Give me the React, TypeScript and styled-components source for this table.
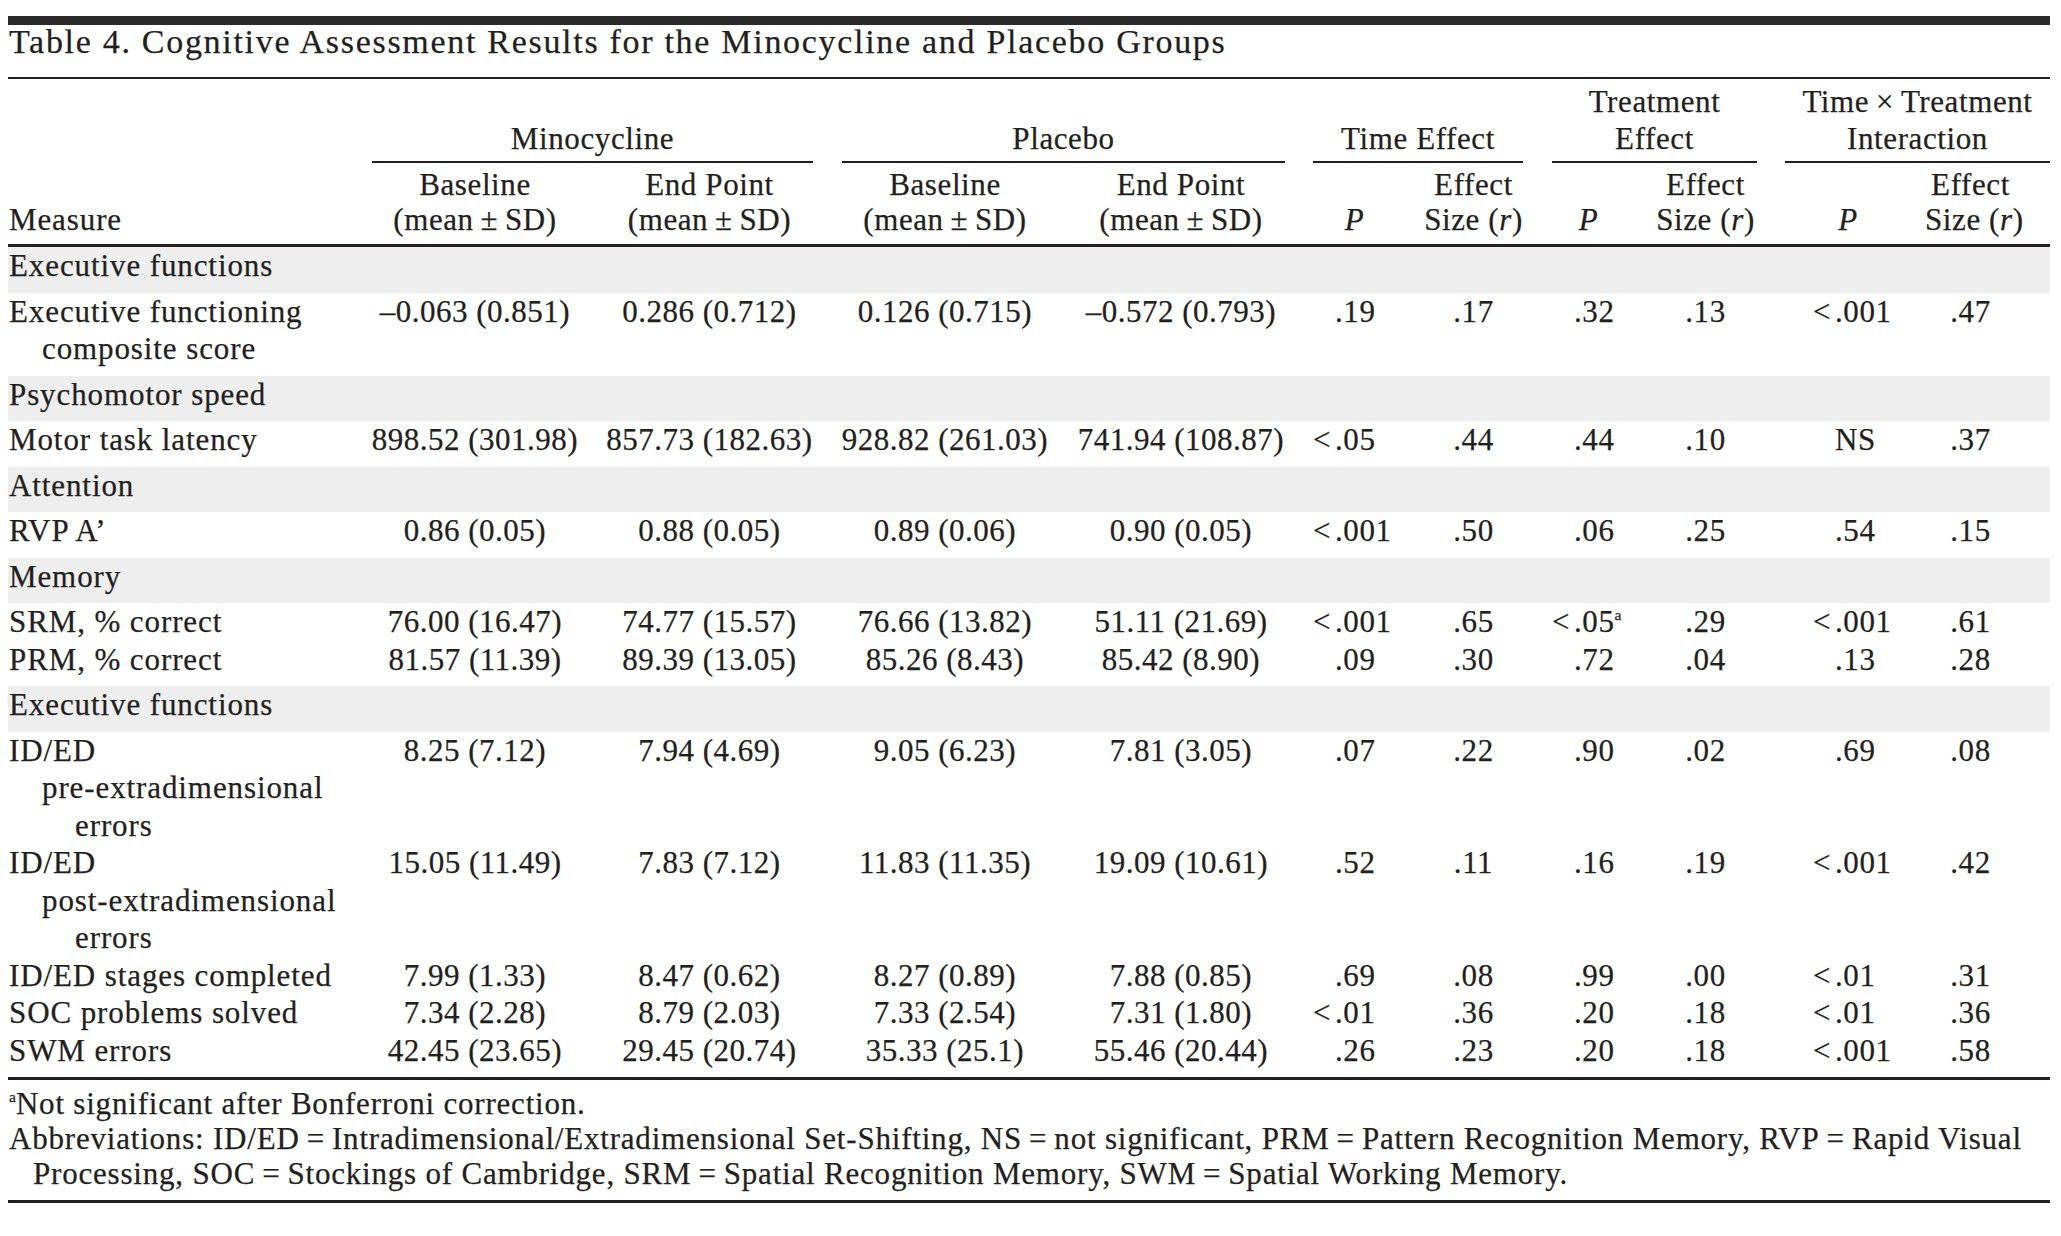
import React from 'react'
import styled, { createGlobalStyle } from 'styled-components'

const INK = '#231f20'
const COLS = '350px 234px 235px 236px 236px 111px 127px 103px 131px 154px 125px'

const GlobalStyle = createGlobalStyle`
  body {
    margin: 0;
    background: #ffffff;
  }
`

const Page = styled.div`
  width: 2042px;
  padding: 16px 0 0 8px;
  font-family: 'Liberation Serif', 'Times New Roman', serif;
  font-size: 31px;
  letter-spacing: 0.6px;
  color: ${INK};
  -webkit-text-stroke: 0.25px ${INK};
`

const TopBar = styled.div`
  height: 9px;
  background: #2b2b2b;
`

const Title = styled.div`
  font-size: 34px;
  line-height: 34px;
  letter-spacing: 1.7px;
  padding: 0 0 18px 1px;
  border-bottom: 2px solid ${INK};
  white-space: nowrap;
`

const Head = styled.div`
  display: grid;
  grid-template-columns: ${COLS};
  border-bottom: 3px solid ${INK};
`

const MeasureHead = styled.div`
  grid-column: 1;
  grid-row: 1 / span 2;
  align-self: end;
  line-height: 35px;
  letter-spacing: 0.9px;
  padding: 0 0 7px 1px;
`

const Group = styled.div<{ $col: number; $l: number; $r: number }>`
  grid-column: ${({ $col }) => $col} / span 2;
  grid-row: 1;
  align-self: end;
  padding: 4px ${({ $r }) => $r}px 0 ${({ $l }) => $l}px;
`

const GroupLabel = styled.div`
  line-height: 37px;
  padding-bottom: 4px;
  border-bottom: 2px solid ${INK};
  text-align: center;
  white-space: nowrap;
`

const SubHead = styled.div<{ $pr?: number }>`
  grid-row: 2;
  align-self: end;
  text-align: center;
  line-height: 35px;
  padding: 4px ${({ $pr }) => $pr ?? 0}px 7px 0;
  white-space: nowrap;
`

const It = styled.i`
  font-style: italic;
`

const Body = styled.div`
  border-bottom: 3px solid ${INK};
`

const Section = styled.div`
  background: #eeeeee;
  line-height: 37.5px;
  letter-spacing: 0.9px;
  padding: 0 0 8px 1px;
`

const Block = styled.div`
  padding-bottom: 8px;
`

const Row = styled.div`
  display: grid;
  grid-template-columns: ${COLS};
  line-height: 37.5px;
`

const LabelLine = styled.div<{ $indent: number }>`
  padding-left: ${({ $indent }) => 1 + $indent * 33}px;
  letter-spacing: 0.9px;
  white-space: nowrap;
`

const Mean = styled.div`
  text-align: center;
  letter-spacing: 0.5px;
  white-space: nowrap;
`

const Dec = styled.div<{ $at: number }>`
  padding-left: ${({ $at }) => $at - 22}px;
  white-space: nowrap;
`

const Lt = styled.span`
  display: inline-block;
  width: 22px;
  padding-right: 5px;
  box-sizing: border-box;
  text-align: right;
`

const Es = styled.div<{ $pr?: number }>`
  text-align: center;
  padding-right: ${({ $pr }) => $pr ?? 0}px;
  white-space: nowrap;
`

const Sup = styled.sup`
  font-size: 0.5em;
  line-height: 0;
  vertical-align: 0.8em;
  letter-spacing: 0;
`

const Notes = styled.div`
  padding: 6px 0 9px;
  border-bottom: 3px solid ${INK};
  line-height: 35px;
  letter-spacing: 0.8px;
  white-space: nowrap;
`

const Note = styled.div<{ $hang?: boolean }>`
  padding-left: ${({ $hang }) => ($hang ? 25 : 1)}px;
`

type Measure = {
  label: string[]
  means: string[]
  stats: string[]
}

type SectionData = {
  name: string
  rows: Measure[]
}

const sections: SectionData[] = [
  {
    name: 'Executive functions',
    rows: [
      {
        label: ['Executive functioning', 'composite score'],
        means: ['\u20130.063 (0.851)', '0.286 (0.712)', '0.126 (0.715)', '\u20130.572 (0.793)'],
        stats: ['.19', '.17', '.32', '.13', '<.001', '.47'],
      },
    ],
  },
  {
    name: 'Psychomotor speed',
    rows: [
      {
        label: ['Motor task latency'],
        means: ['898.52 (301.98)', '857.73 (182.63)', '928.82 (261.03)', '741.94 (108.87)'],
        stats: ['<.05', '.44', '.44', '.10', 'NS', '.37'],
      },
    ],
  },
  {
    name: 'Attention',
    rows: [
      {
        label: ['RVP A\u2019'],
        means: ['0.86 (0.05)', '0.88 (0.05)', '0.89 (0.06)', '0.90 (0.05)'],
        stats: ['<.001', '.50', '.06', '.25', '.54', '.15'],
      },
    ],
  },
  {
    name: 'Memory',
    rows: [
      {
        label: ['SRM, % correct'],
        means: ['76.00 (16.47)', '74.77 (15.57)', '76.66 (13.82)', '51.11 (21.69)'],
        stats: ['<.001', '.65', '<.05^a', '.29', '<.001', '.61'],
      },
      {
        label: ['PRM, % correct'],
        means: ['81.57 (11.39)', '89.39 (13.05)', '85.26 (8.43)', '85.42 (8.90)'],
        stats: ['.09', '.30', '.72', '.04', '.13', '.28'],
      },
    ],
  },
  {
    name: 'Executive functions',
    rows: [
      {
        label: ['ID/ED', 'pre-extradimensional', 'errors'],
        means: ['8.25 (7.12)', '7.94 (4.69)', '9.05 (6.23)', '7.81 (3.05)'],
        stats: ['.07', '.22', '.90', '.02', '.69', '.08'],
      },
      {
        label: ['ID/ED', 'post-extradimensional', 'errors'],
        means: ['15.05 (11.49)', '7.83 (7.12)', '11.83 (11.35)', '19.09 (10.61)'],
        stats: ['.52', '.11', '.16', '.19', '<.001', '.42'],
      },
      {
        label: ['ID/ED stages completed'],
        means: ['7.99 (1.33)', '8.47 (0.62)', '8.27 (0.89)', '7.88 (0.85)'],
        stats: ['.69', '.08', '.99', '.00', '<.01', '.31'],
      },
      {
        label: ['SOC problems solved'],
        means: ['7.34 (2.28)', '8.79 (2.03)', '7.33 (2.54)', '7.31 (1.80)'],
        stats: ['<.01', '.36', '.20', '.18', '<.01', '.36'],
      },
      {
        label: ['SWM errors'],
        means: ['42.45 (23.65)', '29.45 (20.74)', '35.33 (25.1)', '55.46 (20.44)'],
        stats: ['.26', '.23', '.20', '.18', '<.001', '.58'],
      },
    ],
  },
]

// decimal point position inside each P column, from the column's left edge
const P_AT = [36, 37, 64]

function PValue({ value, at }: { value: string; at: number }) {
  const less = value.startsWith('<')
  const [num, note] = (less ? value.slice(1) : value).split('^')
  return (
    <Dec $at={at}>
      <Lt>{less ? '<' : ''}</Lt>
      {num}
      {note ? <Sup>{note}</Sup> : null}
    </Dec>
  )
}

function DataRow({ row }: { row: Measure }) {
  const [tp, tes, trp, tres, ip, ies] = row.stats
  return (
    <Row>
      <div>
        {row.label.map((line, i) => (
          <LabelLine key={i} $indent={i}>
            {line}
          </LabelLine>
        ))}
      </div>
      {row.means.map((m, i) => (
        <Mean key={i}>{m}</Mean>
      ))}
      <PValue value={tp} at={P_AT[0]} />
      <Es>{tes}</Es>
      <PValue value={trp} at={P_AT[1]} />
      <Es>{tres}</Es>
      <PValue value={ip} at={P_AT[2]} />
      <Es $pr={34}>{ies}</Es>
    </Row>
  )
}

const App = () => {
  return (
    <>
      <GlobalStyle />
      <Page>
        <TopBar />
        <Title>Table 4. Cognitive Assessment Results for the Minocycline and Placebo Groups</Title>
        <Head>
          <MeasureHead>Measure</MeasureHead>
          <Group $col={2} $l={14} $r={14}>
            <GroupLabel>Minocycline</GroupLabel>
          </Group>
          <Group $col={4} $l={15} $r={14}>
            <GroupLabel>Placebo</GroupLabel>
          </Group>
          <Group $col={6} $l={14} $r={14}>
            <GroupLabel>Time Effect</GroupLabel>
          </Group>
          <Group $col={8} $l={15} $r={14}>
            <GroupLabel>
              Treatment
              <br />
              Effect
            </GroupLabel>
          </Group>
          <Group $col={10} $l={14} $r={0}>
            <GroupLabel>
              Time{'\u2009'}×{'\u2009'}Treatment
              <br />
              Interaction
            </GroupLabel>
          </Group>
          <SubHead>
            Baseline
            <br />
            (mean{'\u2009'}±{'\u2009'}SD)
          </SubHead>
          <SubHead>
            End Point
            <br />
            (mean{'\u2009'}±{'\u2009'}SD)
          </SubHead>
          <SubHead>
            Baseline
            <br />
            (mean{'\u2009'}±{'\u2009'}SD)
          </SubHead>
          <SubHead>
            End Point
            <br />
            (mean{'\u2009'}±{'\u2009'}SD)
          </SubHead>
          <SubHead>
            <It>P</It>
          </SubHead>
          <SubHead>
            Effect
            <br />
            Size (<It>r</It>)
          </SubHead>
          <SubHead>
            <It>P</It>
          </SubHead>
          <SubHead>
            Effect
            <br />
            Size (<It>r</It>)
          </SubHead>
          <SubHead>
            <It>P</It>
          </SubHead>
          <SubHead $pr={34}>
            Effect
            <br />
            Size (<It>r</It>)
          </SubHead>
        </Head>
        <Body>
          {sections.map((s, i) => (
            <React.Fragment key={i}>
              <Section>{s.name}</Section>
              <Block>
                {s.rows.map((r, j) => (
                  <DataRow key={j} row={r} />
                ))}
              </Block>
            </React.Fragment>
          ))}
        </Body>
        <Notes>
          <Note>
            <Sup>a</Sup>Not significant after Bonferroni correction.
          </Note>
          <Note>
            Abbreviations: ID/ED{'\u2009'}={'\u2009'}Intradimensional/Extradimensional Set-Shifting, NS{'\u2009'}={'\u2009'}not
            significant, PRM{'\u2009'}={'\u2009'}Pattern Recognition Memory, RVP{'\u2009'}={'\u2009'}Rapid Visual
          </Note>
          <Note $hang>
            Processing, SOC{'\u2009'}={'\u2009'}Stockings of Cambridge, SRM{'\u2009'}={'\u2009'}Spatial Recognition Memory,
            SWM{'\u2009'}={'\u2009'}Spatial Working Memory.
          </Note>
        </Notes>
      </Page>
    </>
  )
}

export default App
